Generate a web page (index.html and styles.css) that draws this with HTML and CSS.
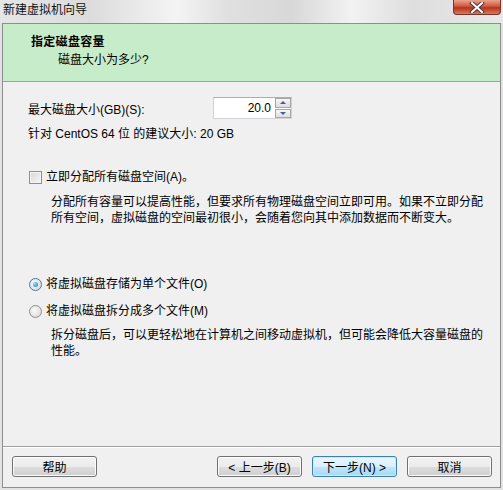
FILE: index.html
```html
<!DOCTYPE html>
<html lang="zh-CN">
<head>
    <meta charset="utf-8" />
    <title>新建虚拟机向导</title>
    <link rel="stylesheet" href="styles.css">
</head>
<body>
    <div class="titlebar">
        <span class="title">新建虚拟机向导</span>
        <div class="close">
            <svg width="18" height="11" viewBox="0 0 18 11">
                <path d="M4 1 L14 10 M14 1 L4 10" stroke="#4a3a3a" stroke-width="4" stroke-linecap="square" />
                <path d="M4 1 L14 10 M14 1 L4 10" stroke="#fff" stroke-width="2" stroke-linecap="square" />
            </svg>
        </div>
    </div>
    <div class="window">
        <div class="header">
            <div class="heading">指定磁盘容量</div>
            <div class="subheading">磁盘大小为多少?</div>
        </div>
        <div class="content">
            <div class="size-row">
                <label class="size-label">最大磁盘大小(GB)(S):</label>
                <div class="spinner">
                    <span class="value">20.0</span>
                    <div class="spin">
                        <span class="spin-btn up"></span>
                        <span class="spin-btn down"></span>
                    </div>
                </div>
            </div>
            <div class="hint">针对 CentOS 64 位 的建议大小: 20 GB</div>
            <div class="option check-row">
                <span class="checkbox"></span>
                <span>立即分配所有磁盘空间(A)。</span>
            </div>
            <p class="desc desc-alloc">分配所有容量可以提高性能，但要求所有物理磁盘空间立即可用。如果不立即分配<br />所有空间，虚拟磁盘的空间最初很小，会随着您向其中添加数据而不断变大。</p>
            <div class="option radio-single">
                <span class="radio checked"></span>
                <span>将虚拟磁盘存储为单个文件(O)</span>
            </div>
            <div class="option radio-multi">
                <span class="radio"></span>
                <span>将虚拟磁盘拆分成多个文件(M)</span>
            </div>
            <p class="desc desc-split">拆分磁盘后，可以更轻松地在计算机之间移动虚拟机，但可能会降低大容量磁盘的<br />性能。</p>
        </div>
        <div class="footer">
            <button class="btn">帮助</button>
            <div class="nav-buttons">
                <button class="btn">&lt; 上一步(B)</button>
                <button class="btn btn-default">下一步(N) &gt;</button>
                <button class="btn">取消</button>
            </div>
        </div>
    </div>
</body>
</html>
```

FILE: styles.css
```css
:root {
    --frame-color: #8e8e8e;
    --green-color: #c7ecca;
}
html {
    font-size: 12px;
}
body {
    margin: 0;
    width: 503px;
    height: 490px;
    overflow: hidden;
    font-family: "Liberation Sans", "Noto Sans CJK SC", sans-serif;
    font-size: 12px;
    color: #000;
    background: #e2e2e2;
}
.titlebar {
    height: 23px;
    display: flex;
    align-items: flex-start;
    justify-content: space-between;
    background: linear-gradient(90deg, #e6e6e6 0%, #dcdcdc 18%, #f4f4f4 35%, #e0e0e0 45%, #d8d8d8 58%, #f2f2f2 70%, #dedede 82%, #e8e8e8 100%);
}
.title {
    padding: 2px 0 0 3px;
    line-height: 16px;
    color: #111;
}
.close {
    width: 46px;
    height: 14px;
    margin-right: 2px;
    display: flex;
    align-items: center;
    justify-content: center;
    border: 1px solid #7a3328;
    border-top: none;
    border-radius: 0 0 4px 4px;
    background: linear-gradient(#e9a48f, #d0573e 45%, #b8321c 55%, #d77a5c);
}
.window {
    margin-left: 2px;
    width: 497px;
    height: 463px;
    border: 1px solid var(--frame-color);
    background: #f0f0f0;
    display: flex;
    flex-direction: column;
}
.header {
    height: 58px;
    box-sizing: border-box;
    background: var(--green-color);
    border-bottom: 1px solid #a0a0a0;
    padding: 10px 0 0 28px;
}
.heading {
    font-weight: bold;
    line-height: 16px;
    letter-spacing: 0.3px;
}
.subheading {
    margin: 2px 0 0 27px;
    line-height: 16px;
}
.content {
    height: 364px;
    box-sizing: border-box;
    padding: 15px 0 0 25px;
}
.size-row {
    display: flex;
    align-items: center;
    height: 22px;
}
.size-label {
    width: 185px;
}
.spinner {
    width: 79px;
    height: 22px;
    box-sizing: border-box;
    border: 1px solid #d0d2d8;
    border-top-color: #abadb3;
    background: #fff;
    display: flex;
    align-items: center;
    justify-content: flex-end;
}
.value {
    margin-right: 4px;
    line-height: 16px;
}
.spin {
    width: 16px;
    height: 20px;
    display: flex;
    flex-direction: column;
    gap: 1px;
}
.spin-btn {
    flex: 1;
    border: 1px solid #a7a7a7;
    background: linear-gradient(#f6f6f6, #dedede);
    display: flex;
    align-items: center;
    justify-content: center;
}
.spin-btn::after {
    content: "";
    width: 0;
    height: 0;
    border-left: 3px solid transparent;
    border-right: 3px solid transparent;
}
.up::after {
    border-bottom: 3px solid #4a5a8e;
}
.down::after {
    border-top: 3px solid #4a5a8e;
}
.hint {
    margin-top: 7px;
    line-height: 16px;
}
.option {
    display: flex;
    align-items: center;
    gap: 4px;
    line-height: 16px;
    margin-left: 1px;
}
.check-row {
    margin-top: 27px;
}
.checkbox {
    width: 11px;
    height: 11px;
    border: 1px solid #8f8f8f;
    background: linear-gradient(135deg, #d8d8d8, #f6f6f6);
    box-shadow: inset 0 0 0 1px #f4f4f4;
}
.radio {
    width: 11px;
    height: 11px;
    border-radius: 50%;
    border: 1px solid #8f8f8f;
    background: radial-gradient(circle at 40% 40%, #fafafa, #d4d4d4);
    display: flex;
    align-items: center;
    justify-content: center;
}
.radio.checked {
    border-color: #3d7bad;
}
.radio.checked::after {
    content: "";
    width: 5px;
    height: 5px;
    border-radius: 50%;
    background: radial-gradient(circle at 35% 35%, #9fe2ff, #1a6fc0);
}
.desc {
    margin: 0;
    padding-left: 23px;
    line-height: 16px;
}
.desc-alloc {
    margin-top: 9px;
}
.radio-single {
    margin-top: 50px;
}
.radio-multi {
    margin-top: 11px;
}
.desc-split {
    margin-top: 8px;
}
.footer {
    flex: 1;
    border-top: 1px solid #a0a0a0;
    box-shadow: inset 0 1px 0 #fff;
    display: flex;
    justify-content: space-between;
    align-items: flex-start;
    padding: 9px 8px 0 9px;
}
.nav-buttons {
    display: flex;
    gap: 10px;
}
.btn {
    width: 85px;
    height: 21px;
    padding: 0;
    font-family: inherit;
    font-size: 12px;
    color: #000;
    border: 1px solid #707070;
    border-radius: 3px;
    background: linear-gradient(#f2f2f2 0%, #ebebeb 50%, #dddddd 51%, #cfcfcf 100%);
    box-shadow: inset 0 0 0 1px #fcfcfc;
}
.btn-default {
    border-color: #3c7fb1;
    background: linear-gradient(#eaf6fd 0%, #d9f0fc 50%, #bee6fd 51%, #a7d9f5 100%);
    box-shadow: inset 0 0 0 1px #cdeafa;
}
```
